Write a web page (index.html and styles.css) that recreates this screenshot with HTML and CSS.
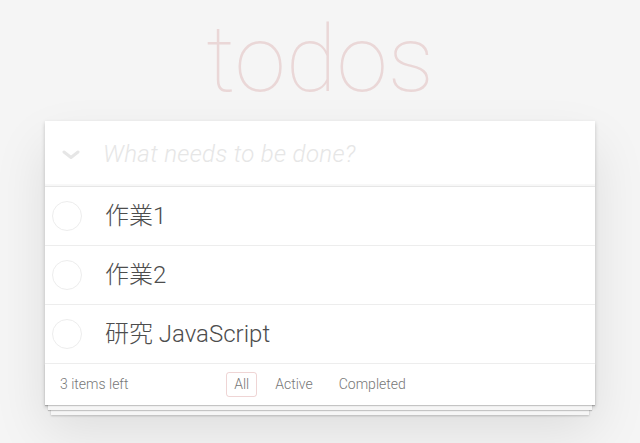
FILE: index.html
```html
<!DOCTYPE html>
<html lang="ja">
<head>
<meta charset="utf-8">
<title>todos</title>
<link rel="stylesheet" href="styles.css">
</head>
<body>
<section class="todoapp">
  <h1 class="title">todos</h1>
  <div class="card">
    <header class="new-row">
      <span class="toggle-all">
        <svg width="18" height="10" viewBox="0 0 18 10"><path d="M2 2 L9 7.5 L16 2" fill="none" stroke="#e6e6e6" stroke-width="3" stroke-linecap="round" stroke-linejoin="round"/></svg>
      </span>
      <input class="new-todo" placeholder="What needs to be done?">
    </header>
    <section class="main">
      <ul class="todo-list">
        <li class="todo"><span class="check"></span><label class="todo-label">作業1</label></li>
        <li class="todo"><span class="check"></span><label class="todo-label">作業2</label></li>
        <li class="todo"><span class="check"></span><label class="todo-label">研究 JavaScript</label></li>
      </ul>
    </section>
    <footer class="footer">
      <span class="todo-count"><strong class="count-num">3</strong> items left</span>
      <ul class="filters">
        <li><a class="filter selected">All</a></li>
        <li><a class="filter">Active</a></li>
        <li><a class="filter">Completed</a></li>
      </ul>
      <span class="spacer"></span>
    </footer>
  </div>
</section>
</body>
</html>
```
FILE: styles.css
```css
* { box-sizing: border-box; }
html, body { margin: 0; padding: 0; }
html { background: #f5f5f5; }
body {
  min-height: 443px;
  overflow: hidden;
  font-family: "Roboto", "Liberation Sans", "Noto Sans CJK JP", sans-serif;
  font-size: 14px;
  line-height: 1.4em;
  color: #4d4d4d;
  font-weight: 300;
}
.todoapp {
  width: 550px;
  margin: 0 auto;
}
.title {
  margin: 0;
  height: 121px;
  padding-top: 13px;
  font-size: 93px;
  line-height: 93px;
  font-weight: 100;
  text-align: center;
  color: rgba(175, 47, 47, 0.15);
  font-family: "Roboto", "Liberation Sans", sans-serif;
}
.card {
  background: #fff;
  position: relative;
  z-index: 0;
  box-shadow: 0 2px 4px 0 rgba(0,0,0,0.2), 0 25px 50px 0 rgba(0,0,0,0.1);
}
.new-row {
  display: flex;
  align-items: center;
  height: 65px;
  box-shadow: inset 0 -2px 1px rgba(0,0,0,0.03);
}
.toggle-all {
  width: 58px;
  height: 65px;
  display: flex;
  align-items: center;
  justify-content: center;
  padding-top: 2px;
  padding-right: 6px;
}
.new-todo {
  flex: 1;
  border: none;
  outline: none;
  background: transparent;
  padding: 0 16px 0 0;
  height: 65px;
  font-family: "Roboto", "Liberation Sans", sans-serif;
  font-size: 24px;
  font-weight: 300;
  color: #4d4d4d;
}
.new-todo::placeholder {
  font-style: italic;
  font-weight: 300;
  letter-spacing: 0.35px;
  color: #e6e6e6;
}
.main {
  border-top: 1px solid #e6e6e6;
}
.todo-list { margin: 0; padding: 0; list-style: none; }
.todo {
  display: flex;
  align-items: center;
  height: 59px;
  border-bottom: 1px solid #ededed;
}
.check {
  width: 30px;
  height: 30px;
  margin-left: 7px;
  margin-right: 23px;
  border: 1px solid #ededed;
  border-radius: 50%;
  flex: none;
}
.todo-label {
  font-size: 24px;
  line-height: 1.2;
  color: #4d4d4d;
  font-weight: 300;
  font-family: "Roboto", "Liberation Sans", "Noto Sans CJK JP", sans-serif;
}
.footer {
  position: relative;
  color: #777;
  padding: 0 15px;
  height: 41px;
  display: grid;
  grid-template-columns: 1fr auto 1fr;
  align-items: center;
  font-size: 14px;
}
.footer::before {
  content: "";
  position: absolute;
  left: 0;
  right: 0;
  bottom: 0;
  height: 41px;
  z-index: -1;
  box-shadow: 0 1px 1px rgba(0,0,0,0.2),
              0 8px 0 -3px #f6f6f6,
              0 9px 1px -3px rgba(0,0,0,0.2),
              0 16px 0 -6px #f6f6f6,
              0 17px 2px -6px rgba(0,0,0,0.2);
}
.todo-count { padding-top: 1px; }
.count-num { font-weight: 300; }
.filters {
  margin: 0;
  padding: 0;
  list-style: none;
  display: flex;
  gap: 4px;
}
.filters li { margin: 0 3px; }
.filter {
  display: block;
  color: inherit;
  padding: 3px 7px;
  line-height: 17px;
  border: 1px solid transparent;
  border-radius: 3px;
}
.filter.selected { border-color: rgba(175, 47, 47, 0.2); }
```
